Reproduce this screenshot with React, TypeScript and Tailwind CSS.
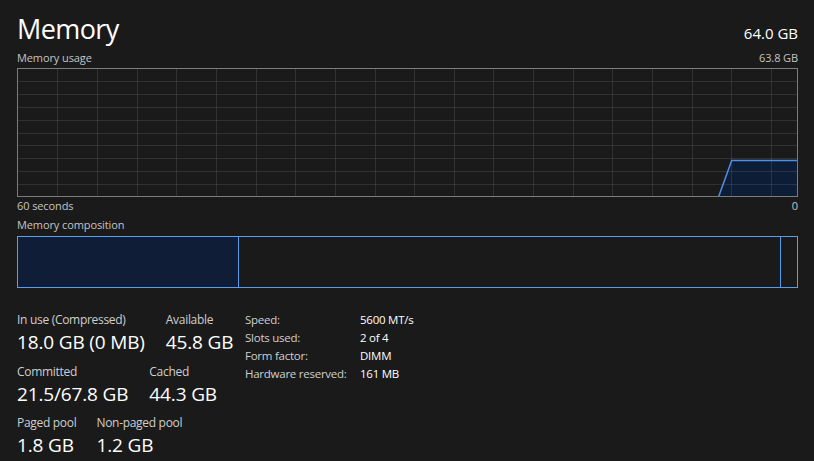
import React from "react";

const gridXs = Array.from({ length: 19 }, (_, i) => 40.3 + i * 39.65);
const gridYs = Array.from({ length: 9 }, (_, i) => 13.3 + i * 12.8);

function UsageGraph() {
  return (
    <svg width="781" height="129" viewBox="0 0 781 129" className="block">
      <polygon
        points="701.7,128.5 714.7,92.5 780.5,92.5 780.5,128.5"
        fill="#0e1d36"
      />
      {gridXs.map((x) => (
        <line
          key={`x${x}`}
          x1={Math.round(x) + 0.5}
          y1={0}
          x2={Math.round(x) + 0.5}
          y2={129}
          stroke="rgba(255,255,255,0.1)"
          strokeWidth={1}
        />
      ))}
      {gridYs.map((y) => (
        <line
          key={`y${y}`}
          x1={0}
          y1={Math.round(y) + 0.5}
          x2={781}
          y2={Math.round(y) + 0.5}
          stroke="rgba(255,255,255,0.1)"
          strokeWidth={1}
        />
      ))}
      <polyline
        points="701.7,128.5 714.7,92.5 780.5,92.5"
        fill="none"
        stroke="#4d8fe6"
        strokeWidth={1.5}
      />
      <rect
        x={0.5}
        y={0.5}
        width={780}
        height={128}
        fill="none"
        stroke="#7c7c7c"
        strokeWidth={1}
      />
    </svg>
  );
}

function Stat({ label, value }: { label: string; value: string }) {
  return (
    <div className="flex flex-col whitespace-nowrap">
      <span className="text-[12px] leading-[16px] tracking-[-0.3px] text-[#cfcfcf]">
        {label}
      </span>
      <span className="mt-[2px] text-[19px] leading-[24px] tracking-[-0.15px] text-white">
        {value}
      </span>
    </div>
  );
}

const details = [
  ["Speed:", "5600 MT/s"],
  ["Slots used:", "2 of 4"],
  ["Form factor:", "DIMM"],
  ["Hardware reserved:", "161 MB"],
];

export default function App() {
  return (
    <div
      className="w-[814px] h-[461px] overflow-hidden bg-[#1a1a1a] pl-[17px] pr-[16px] text-white"
      style={{ fontFamily: '"Open Sans", "Noto Sans", sans-serif' }}
    >
      {/* Header */}
      <div className="flex justify-between items-baseline pt-[11px] h-[49px]">
        <h1 className="text-[27px] leading-[36px] tracking-[-0.6px] font-normal">
          Memory
        </h1>
        <span className="text-[15px] leading-[20px]">64.0 GB</span>
      </div>

      {/* Memory usage */}
      <div className="mt-[2px] flex justify-between text-[11px] leading-[14px] tracking-[-0.1px] text-[#c4c4c4]">
        <span>Memory usage</span>
        <span>63.8 GB</span>
      </div>
      <div className="mt-[3px]">
        <UsageGraph />
      </div>
      <div className="mt-[2px] flex justify-between text-[11px] leading-[14px] tracking-[-0.1px] text-[#c4c4c4]">
        <span>60 seconds</span>
        <span>0</span>
      </div>

      {/* Memory composition */}
      <div className="mt-[5px] text-[11px] leading-[14px] tracking-[-0.1px] text-[#c4c4c4]">
        Memory composition
      </div>
      <div className="mt-[4px] flex h-[52px] border border-[#5c9cec]">
        <div className="w-[221px] bg-[#0f1d36] border-r border-[#5c9cec]" />
        <div className="flex-1 border-r border-[#5c9cec]" />
        <div className="w-[16px]" />
      </div>

      {/* Stats */}
      <div className="mt-[24px] flex items-start">
        <div className="w-[228px] flex flex-col gap-[9.5px]">
          <div className="flex gap-[21px]">
            <Stat label="In use (Compressed)" value="18.0 GB (0 MB)" />
            <Stat label="Available" value="45.8 GB" />
          </div>
          <div className="flex gap-[21px]">
            <Stat label="Committed" value="21.5/67.8 GB" />
            <Stat label="Cached" value="44.3 GB" />
          </div>
          <div className="flex gap-[20px]">
            <Stat label="Paged pool" value="1.8 GB" />
            <Stat label="Non-paged pool" value="1.2 GB" />
          </div>
        </div>
        <div className="-mt-[1px] grid grid-cols-[115px_auto] content-start text-[11.5px] leading-[18px] tracking-[-0.25px] whitespace-nowrap">
          {details.map(([k, v]) => (
            <React.Fragment key={k}>
              <span className="text-[#cfcfcf]">{k}</span>
              <span className="text-white">{v}</span>
            </React.Fragment>
          ))}
        </div>
      </div>
    </div>
  );
}
